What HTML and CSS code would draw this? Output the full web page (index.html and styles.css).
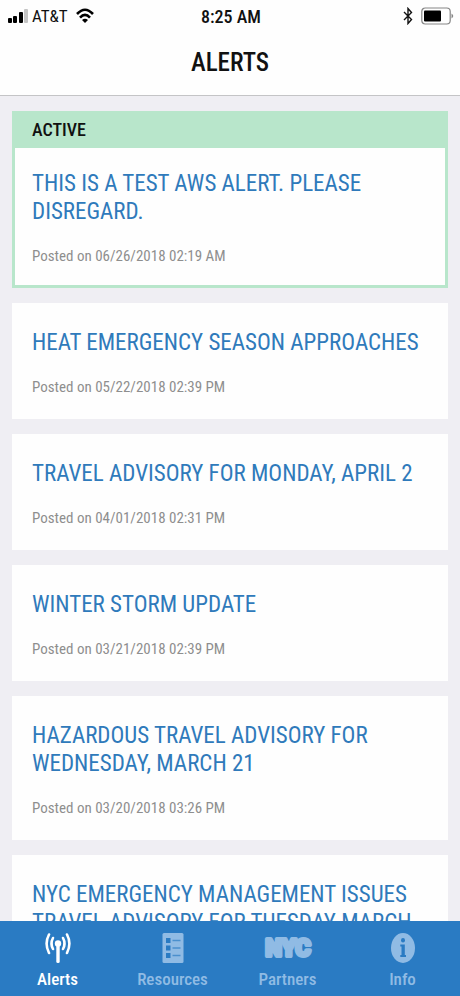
FILE: index.html
```html
<!DOCTYPE html>
<html lang="en">
<head>
<meta charset="utf-8">
<meta name="viewport" content="width=device-width, initial-scale=1">
<title>Alerts</title>
<link rel="stylesheet" href="styles.css">
</head>
<body>
<header class="top">
  <div class="status">
    <div class="status-left">
      <svg width="20" height="14" viewBox="0 0 20 14" aria-hidden="true">
        <rect x="0" y="9" width="4" height="5" rx="1"/><rect x="5" y="7" width="4" height="7" rx="1"/><rect x="11" y="3" width="4" height="11" rx="1"/><rect x="16" y="0" width="4" height="14" rx="1" fill="#c4c4c4"/>
      </svg>
      <span class="carrier">AT&amp;T</span>
      <svg class="wifi" width="18" height="16" viewBox="0 0 18 16" aria-hidden="true">
        <g fill="none" stroke="#000" stroke-width="2.6"><path d="M1 6Q9-2.6 17 6"/><path d="M4 9.6Q9 4.2 14 9.6"/></g>
        <path d="M9 15L6 11.9Q9 9.4 12 11.9Z"/>
      </svg>
    </div>
    <time class="clock">8:25 AM</time>
    <div class="status-right">
      <svg width="10" height="18" viewBox="0 0 10 18" aria-hidden="true"><path d="M1 5L8.500 12.500L5 16.500V1.500L8.500 5.500L1 13" fill="none" stroke="#111" stroke-width="1.400"/></svg>
      <svg width="33" height="18" viewBox="0 0 33 18" aria-hidden="true"><rect x=".8" y="1" width="28.400" height="16" rx="3.500" fill="none" stroke="#858585" stroke-width="1.200"/><rect x="3" y="3.500" width="17" height="11" rx="1"/><path d="M30.500 6.500Q34 9 30.500 11.500Z" fill="#858585"/></svg>
    </div>
  </div>
  <h1 class="title">ALERTS</h1>
</header>
<main class="list">
  <article class="card card-active">
    <p class="flag">ACTIVE</p>
    <div class="body"><h2><a href="#a1">THIS IS A TEST AWS ALERT. PLEASE DISREGARD.</a></h2><p class="date">Posted on 06/26/2018 02:19 AM</p></div>
  </article>
  <article class="card"><div class="body"><h2><a href="#a2">HEAT EMERGENCY SEASON APPROACHES</a></h2><p class="date">Posted on 05/22/2018 02:39 PM</p></div></article>
  <article class="card"><div class="body"><h2><a href="#a3">TRAVEL ADVISORY FOR MONDAY, APRIL 2</a></h2><p class="date">Posted on 04/01/2018 02:31 PM</p></div></article>
  <article class="card"><div class="body"><h2><a href="#a4">WINTER STORM UPDATE</a></h2><p class="date">Posted on 03/21/2018 02:39 PM</p></div></article>
  <article class="card"><div class="body"><h2><a href="#a5">HAZARDOUS TRAVEL ADVISORY FOR WEDNESDAY, MARCH 21</a></h2><p class="date">Posted on 03/20/2018 03:26 PM</p></div></article>
  <article class="card"><div class="body"><h2><a href="#a6">NYC EMERGENCY MANAGEMENT ISSUES TRAVEL ADVISORY FOR TUESDAY MARCH</a></h2></div></article>
</main>
<nav class="tabs">
  <a class="tab tab-current" href="#alerts" aria-current="page">
    <svg width="28" height="32" viewBox="0 0 28 32" aria-hidden="true"><g fill="none" stroke="currentColor" stroke-width="2.600" stroke-linecap="round"><path d="M9 6Q6 11.500 9 17"/><path d="M19 6Q22 11.500 19 17"/><path d="M5 2.500Q.2 11.500 5 21"/><path d="M23 2.500Q27.800 11.500 23 21"/></g><circle cx="14" cy="11.500" r="3.200" fill="currentColor"/><rect x="12.300" y="12" width="3.400" height="19" rx="1.500" fill="currentColor"/></svg>
    <span>Alerts</span>
  </a>
  <a class="tab" href="#resources">
    <svg width="28" height="32" viewBox="0 0 28 32" aria-hidden="true"><rect x="3.500" y="1" width="21" height="30" rx="1.500" fill="currentColor"/><g fill="#2a7bc3"><rect x="7" y="6" width="4.500" height="5"/><rect x="7" y="13.500" width="4.500" height="5"/><rect x="7" y="21" width="4.500" height="5"/></g><path d="M13.500 8.500h8M13.500 16h8M13.500 23.500h8" stroke="#4b90cd" stroke-width="1.400"/></svg>
    <span>Resources</span>
  </a>
  <a class="tab" href="#partners">
    <svg width="52" height="32" viewBox="0 0 52 32" aria-hidden="true"><text class="logo" x="26" y="24" text-anchor="middle">NYC</text></svg>
    <span>Partners</span>
  </a>
  <a class="tab" href="#info">
    <svg width="28" height="32" viewBox="0 0 28 32" aria-hidden="true"><ellipse cx="14" cy="16" rx="12" ry="15" fill="currentColor"/><g fill="#2a7bc3"><ellipse cx="14" cy="8.300" rx="2" ry="2.300"/><path d="M11.300 12.500H15.800V23H17V25H11.300V23H12.500V14.500H11.300Z"/></g></svg>
    <span>Info</span>
  </a>
</nav>
</body>
</html>
```
FILE: styles.css
```css
* { box-sizing: border-box; }
body {
  margin: 0;
  height: 100vh;
  display: flex;
  flex-direction: column;
  background: #efeef3;
  color: #111;
  font-family: "Roboto Condensed", Roboto, "Liberation Sans", sans-serif;
}
h1, h2, p { margin: 0; }
a { color: inherit; text-decoration: none; }
svg { display: block; flex: none; }
.top {
  flex: none;
  background: #fefefe;
  border-bottom: 1px solid #c4c4c6;
}
.status {
  display: grid;
  grid-template-columns: 1fr auto 1fr;
  align-items: center;
  height: 32px;
  padding: 0 6px 0 8px;
}
.status-left, .status-right { display: flex; align-items: center; gap: 4px; }
.status-right { justify-content: flex-end; gap: 8px; }
.carrier { font-size: 17px; }
.wifi { margin-left: 4px; }
.clock { font-size: 18px; font-weight: 500; }
.title {
  padding: 15px 0 16px;
  font-size: 25px;
  line-height: 32px;
  font-weight: 500;
  text-align: center;
}
.list {
  flex: 1;
  min-height: 0;
  overflow-y: auto;
  scrollbar-width: none;
  display: flex;
  flex-direction: column;
  gap: 15px;
  padding: 15px 12px;
}
.card { flex: none; background: #fefefe; }
.card-active { border: 3px solid #b8e6cb; border-top: 0; }
.flag {
  padding: 0 17px;
  background: #b8e6cb;
  font-size: 18px;
  line-height: 37px;
  font-weight: 500;
}
.body { padding: 26px 20px 23px; }
.card-active .body { padding: 22px 17px 20px; }
h2 {
  color: #2f7abb;
  font-size: 23px;
  line-height: 28px;
  font-weight: 400;
}
.date {
  margin-top: 21px;
  color: #8e8e8e;
  font-size: 15px;
  line-height: 18px;
}
.tabs {
  flex: none;
  display: grid;
  grid-template-columns: repeat(4, 1fr);
  background: #2a7bc3;
  color: #90bbe4;
}
.tab {
  display: flex;
  flex-direction: column;
  align-items: center;
  gap: 5px;
  padding: 11px 0 7px;
  font-size: 17px;
  line-height: 20px;
  font-weight: 500;
}
.tab-current { color: #fff; }
.logo {
  fill: currentColor;
  stroke: currentColor;
  stroke-width: 4px;
  stroke-linejoin: round;
  font-family: Roboto, sans-serif;
  font-size: 23px;
  font-weight: 800;
}
```
